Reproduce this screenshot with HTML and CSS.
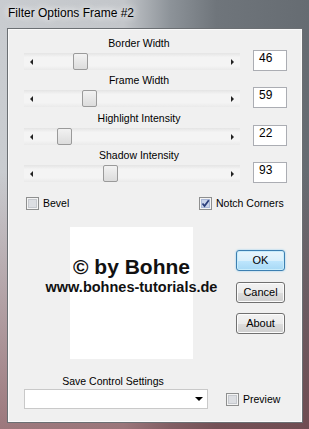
FILE: index.html
```html
<!DOCTYPE html>
<html lang="en">
<head>
  <meta charset="UTF-8" />
  <title>Filter Options Frame #2</title>
  <link rel="stylesheet" href="styles.css">
</head>
<body>

<div class="window">
  <div class="titlebar"><span class="title">Filter Options Frame #2</span></div>

  <div class="client">

    <!-- Slider -->
    <div class="group">
      <div class="label">Border Width</div>
      <div class="row">
        <div class="track"><span class="arrow left"></span><span class="thumb" style="left:49px"></span><span class="arrow right"></span></div>
        <div class="value">46</div>
      </div>
    </div>
    <div class="group">
      <div class="label">Frame Width</div>
      <div class="row">
        <div class="track"><span class="arrow left"></span><span class="thumb" style="left:58px"></span><span class="arrow right"></span></div>
        <div class="value">59</div>
      </div>
    </div>
    <div class="group">
      <div class="label">Highlight Intensity</div>
      <div class="row">
        <div class="track"><span class="arrow left"></span><span class="thumb" style="left:33px"></span><span class="arrow right"></span></div>
        <div class="value">22</div>
      </div>
    </div>
    <div class="group">
      <div class="label">Shadow Intensity</div>
      <div class="row">
        <div class="track"><span class="arrow left"></span><span class="thumb" style="left:79px"></span><span class="arrow right"></span></div>
        <div class="value">93</div>
      </div>
    </div>

    <!-- Checkbox -->
    <div class="checks">
      <label class="check">
        <svg width="13" height="13" viewBox="0 0 13 13"><rect x="0.5" y="0.5" width="12" height="12" fill="#f4f4f4" stroke="#8e8f8f"/><rect x="2.5" y="2.5" width="8" height="8" fill="#dcdee2" stroke="#c6c9ce"/></svg>
        Bevel
      </label>
      <label class="check">
        <svg width="13" height="13" viewBox="0 0 13 13"><rect x="0.5" y="0.5" width="12" height="12" fill="#f4f4f4" stroke="#8e8f8f"/><rect x="2.5" y="2.5" width="8" height="8" fill="#c9d3ea" stroke="#aab8d8"/><path d="M3.5 6.5 L5.5 9 L9.8 3.2" fill="none" stroke="#2c3f7c" stroke-width="1.8"/></svg>
        Notch Corners
      </label>
    </div>

    <!-- Preview + tombol -->
    <div class="middle">
      <div class="preview">
        <div class="copy">© by Bohne</div>
        <div class="url">www.bohnes-tutorials.de</div>
      </div>
      <div class="buttons">
        <div class="btn default">OK</div>
        <div class="btn">Cancel</div>
        <div class="btn">About</div>
      </div>
    </div>

    <!-- Save settings -->
    <div class="save">
      <div class="save-col">
        <div class="save-label">Save Control Settings</div>
        <div class="combo"><span class="combo-arrow"></span></div>
      </div>
      <label class="check preview-check">
        <svg width="13" height="13" viewBox="0 0 13 13"><rect x="0.5" y="0.5" width="12" height="12" fill="#f4f4f4" stroke="#8e8f8f"/><rect x="2.5" y="2.5" width="8" height="8" fill="#dcdee2" stroke="#c6c9ce"/></svg>
        Preview
      </label>
    </div>

  </div>
</div>

</body>
</html>
```

FILE: styles.css
```css
body {
  margin: 0;
  font-family: "Liberation Sans", Arial, sans-serif;
  background: #5a5e62;
}
.window {
  width: 309px;
  height: 429px;
  box-sizing: border-box;
  padding: 0 6px 6px 7px;
  display: flex;
  flex-direction: column;
  background:
    linear-gradient(to bottom, rgba(120,50,50,0) 40%, rgba(120,50,55,0.55) 100%),
    linear-gradient(to right, #c9ccd0 0%, #c3c6ca 40%, #8d9399 55%, #6f757b 70%, #666c72 100%);
}
.titlebar {
  height: 28px;
  display: flex;
  align-items: center;
  padding: 0 0 2px 1px;
  box-sizing: border-box;
}
.title {
  font-size: 12px;
  color: #000;
  text-shadow: 0 0 6px #fff, 0 0 10px rgba(255,255,255,0.8);
}
.client {
  flex: 1;
  background: #f0f0f0;
  border: 1px solid #6b6f73;
  box-shadow: inset 0 0 0 1px #fafafa;
  padding: 7.5px 0 0 16px;
  font-size: 10.5px;
  color: #000;
}
.group {
  margin-bottom: 3.5px;
}
.label {
  width: 230px;
  text-align: center;
  line-height: 13px;
}
.row {
  display: flex;
  gap: 13px;
  height: 21px;
}
.track {
  position: relative;
  width: 216px;
  height: 17px;
  margin-top: 3px;
  background: linear-gradient(to bottom, #e4e4e4, #f4f4f4 25%, #f4f4f4 75%, #eaeaea);
}
.thumb {
  position: absolute;
  top: 0;
  width: 13px;
  height: 15px;
  border: 1px solid #9a9a9a;
  border-radius: 2px;
  background: linear-gradient(to bottom, #f2f2f2, #dcdcdc);
}
.arrow {
  position: absolute;
  top: 6px;
  width: 0;
  height: 0;
  border-top: 3px solid transparent;
  border-bottom: 3px solid transparent;
}
.arrow.left {
  left: 6px;
  border-right: 3px solid #222;
}
.arrow.right {
  right: 6px;
  border-left: 3px solid #222;
}
.value {
  width: 34px;
  height: 21px;
  box-sizing: border-box;
  background: #fff;
  border: 1px solid #abadb3;
  font-size: 12px;
  line-height: 15px;
  padding-left: 5px;
}
.checks {
  display: grid;
  grid-template-columns: 173px auto;
  margin-top: 13px;
  padding-left: 2px;
}
.check {
  display: inline-flex;
  align-items: center;
  gap: 4px;
  height: 14px;
}
.middle {
  display: flex;
  margin-top: 17px;
}
.preview {
  margin-left: 46px;
  width: 123px;
  height: 132px;
  background: #fff;
  display: flex;
  flex-direction: column;
  align-items: center;
  padding-top: 28px;
  box-sizing: border-box;
  font-weight: bold;
  color: #111;
  white-space: nowrap;
}
.copy {
  font-size: 21px;
  line-height: 24px;
}
.url {
  font-size: 14.5px;
  line-height: 17px;
}
.buttons {
  margin-left: 43px;
  padding-top: 23px;
  display: flex;
  flex-direction: column;
  gap: 10.5px;
}
.btn {
  width: 49px;
  height: 21px;
  box-sizing: border-box;
  border: 1px solid #707070;
  border-radius: 3px;
  background: linear-gradient(to bottom, #f2f2f2 0%, #ebebeb 50%, #dddddd 51%, #cfcfcf 100%);
  box-shadow: inset 0 0 0 1px #fcfcfc;
  text-align: center;
  line-height: 19px;
  font-size: 11px;
}
.btn.default {
  border-color: #3c7fb1;
  background: linear-gradient(to bottom, #e8f5fc 0%, #d9f0fc 50%, #bee6fd 51%, #a7d9f5 100%);
  box-shadow: inset 0 0 0 1px #c8ecfb, 0 0 2px #7fc6ef;
}
.save {
  display: flex;
  align-items: flex-end;
  margin-top: 15px;
}
.save-col {
  width: 184px;
}
.save-label {
  text-align: center;
  line-height: 14px;
  padding-right: 6px;
}
.combo {
  position: relative;
  margin-top: 1px;
  height: 20px;
  box-sizing: border-box;
  background: #fff;
  border: 1px solid #c9c9c9;
}
.combo-arrow {
  position: absolute;
  right: 4px;
  top: 7px;
  border-left: 4px solid transparent;
  border-right: 4px solid transparent;
  border-top: 4px solid #000;
}
.preview-check {
  margin-left: 18px;
  margin-bottom: 3px;
}
```
